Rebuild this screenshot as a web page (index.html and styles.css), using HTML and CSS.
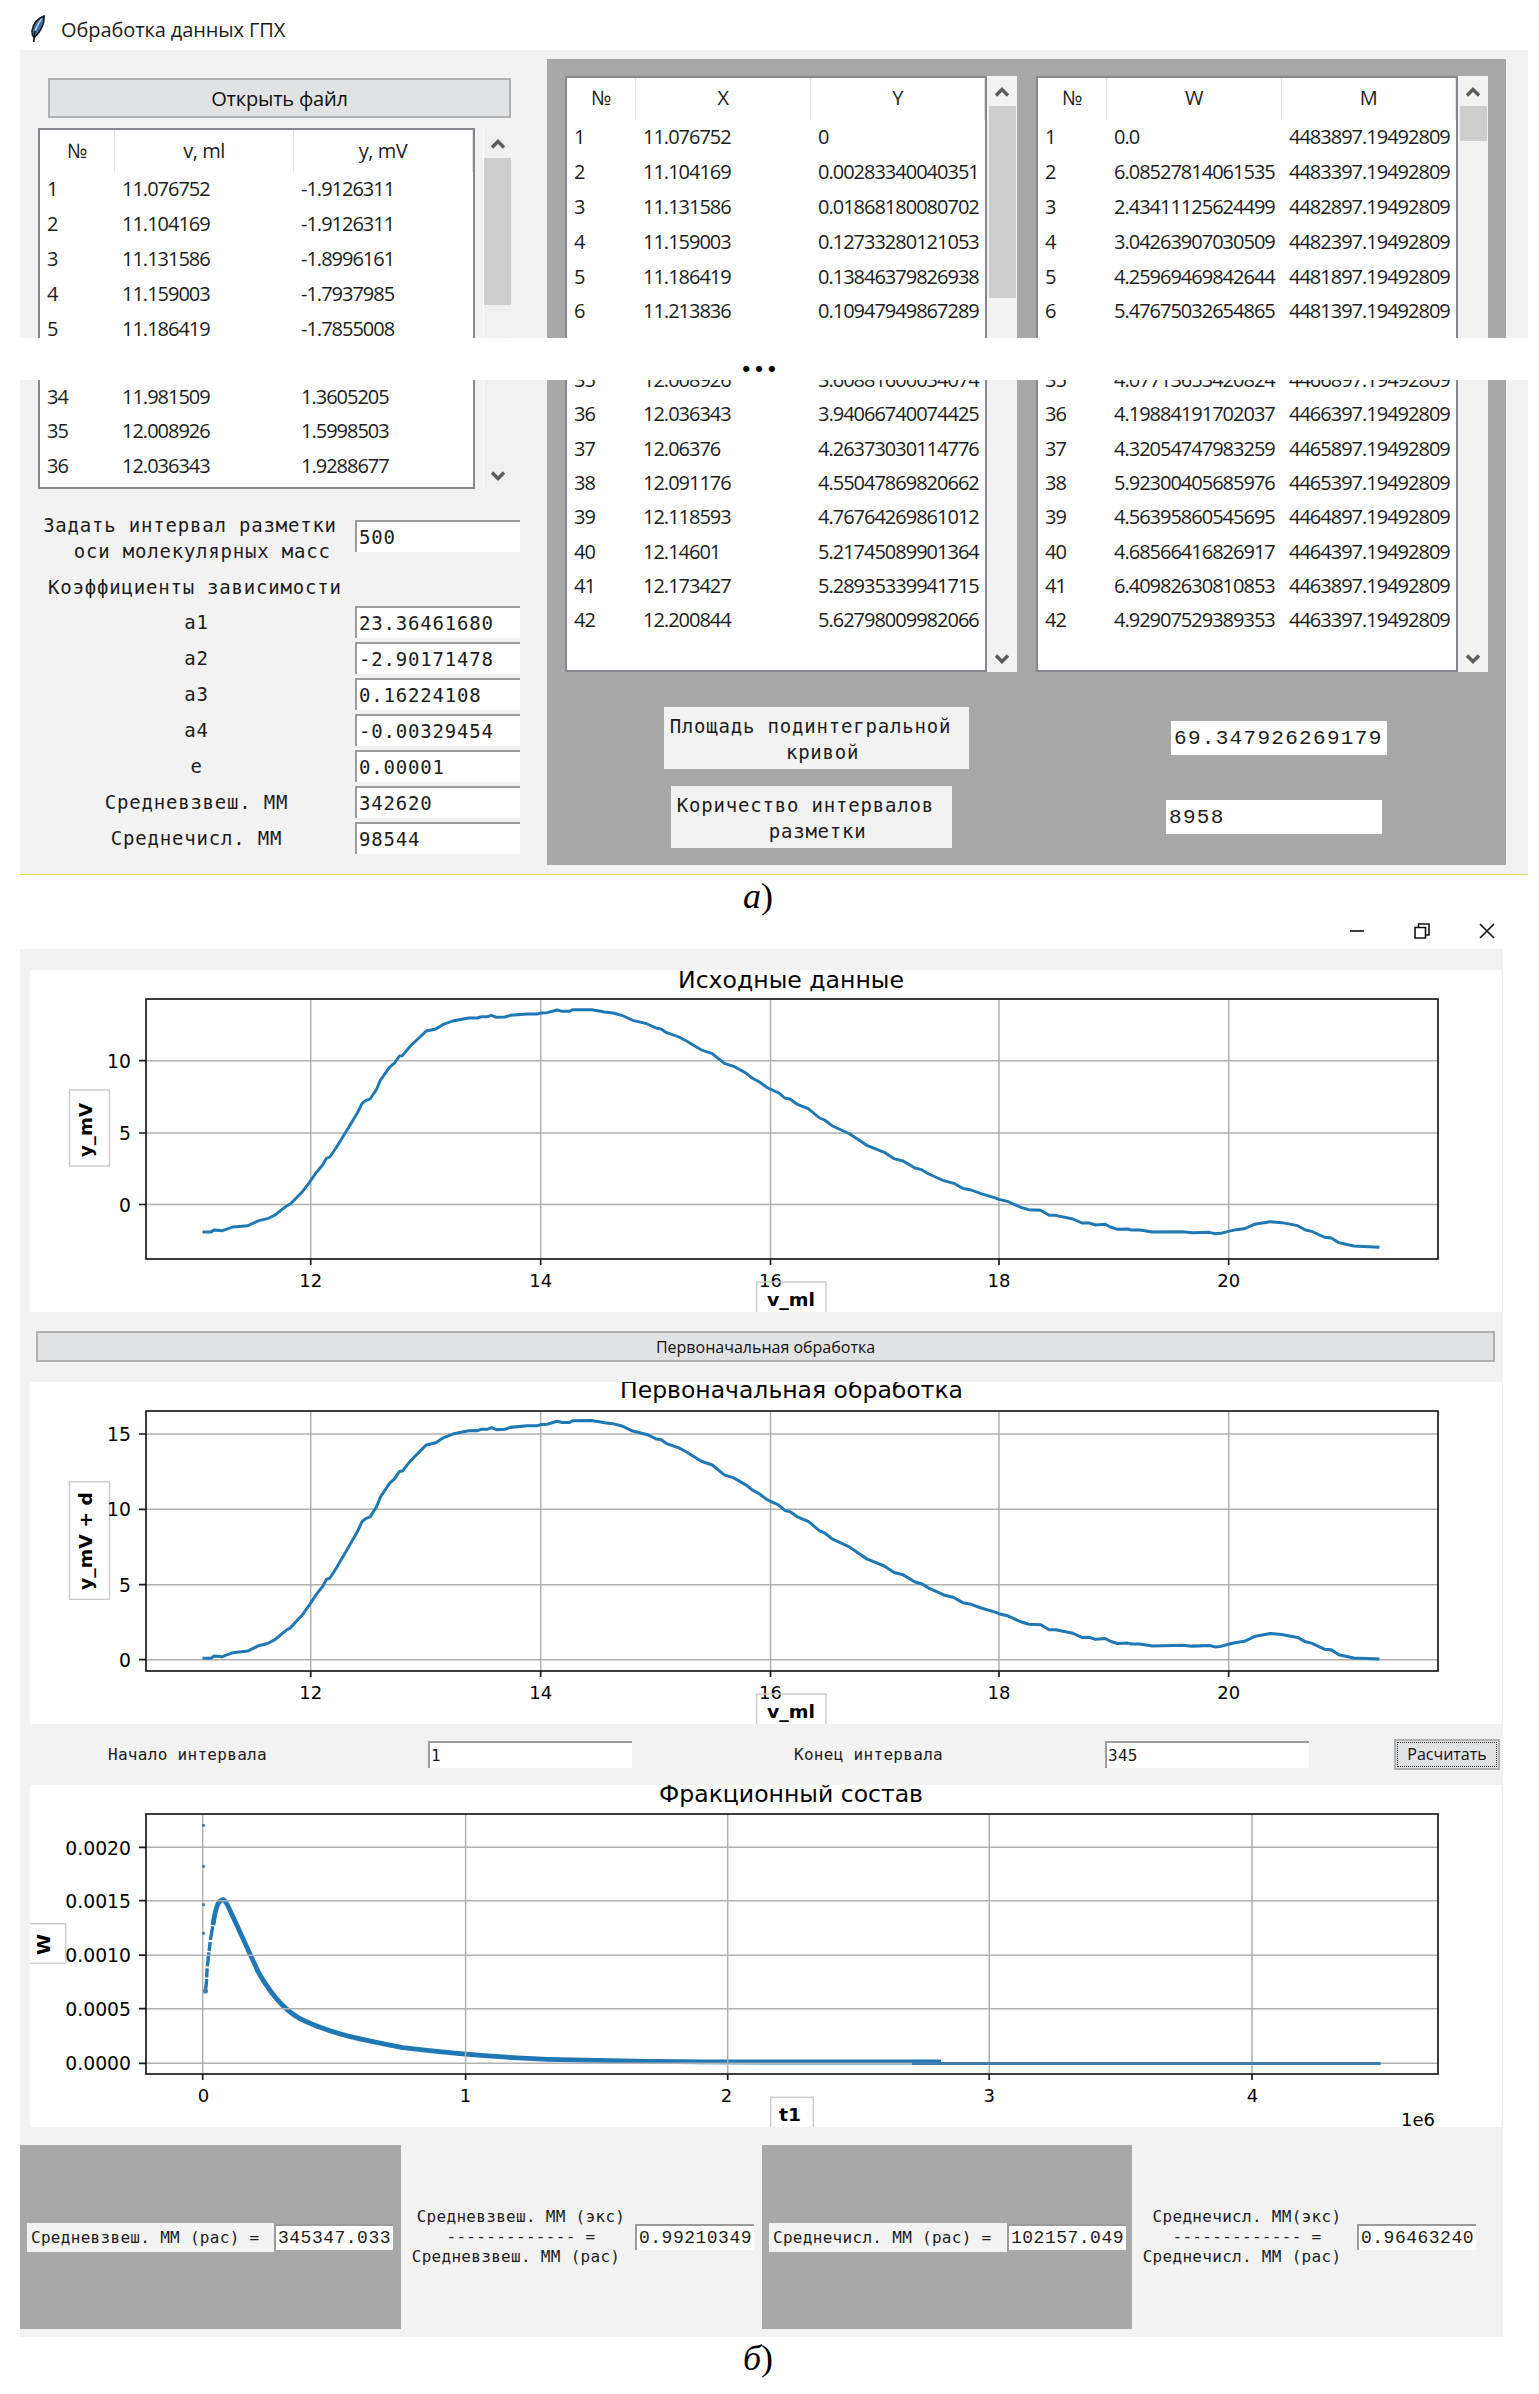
FILE: index.html
```html
<!DOCTYPE html>
<html lang="ru">
<head>
  <meta charset="UTF-8">
  <meta name="viewport" content="width=device-width, initial-scale=1.0">
  <title>Обработка данных ГПХ</title>
  <link rel="stylesheet" href="styles.css">
</head>
<body>
  <!-- Shared scrollbar arrows -->
  <svg class="defs" width="0" height="0">
    <symbol id="up" viewBox="0 0 14 11"><path d="M1 8.5 7 2.5 13 8.5" fill="none" stroke="#5c5c5c" stroke-width="3.4"/></symbol>
    <symbol id="down" viewBox="0 0 14 11"><path d="M1 2.5 7 8.5 13 2.5" fill="none" stroke="#5c5c5c" stroke-width="3.4"/></symbol>
  </svg>

  <!-- Data window -->
  <section class="data-window">
    <div class="title-bar">
      <svg class="feather" viewBox="0 0 18 30">
        <path d="M15.5 1C9 3 3.5 9 2.5 17L3 22L5 24L9 20C13 15 16 8 15.5 1Z" fill="#3f6ea3" stroke="#10151f" stroke-width="1.6"/>
        <path d="M13 4C9 9 6 15 5 22" stroke="#b9d3ee" stroke-width="1.5" fill="none"/>
        <path d="M6 17C5 21 4.5 25 4.5 29" stroke="#111" stroke-width="1.8" fill="none"/>
      </svg>
      <span>Обработка данных ГПХ</span>
    </div>

    <div class="slice slice-top">
      <div class="side">
        <button class="open-btn">Открыть файл</button>
        <div class="table-wrap">
          <div class="table table-source">
            <div class="head"><span>№</span><span>v, ml</span><span>y, mV</span></div>
            <div class="tr"><span>1</span><span>11.076752</span><span>-1.9126311</span></div>
            <div class="tr"><span>2</span><span>11.104169</span><span>-1.9126311</span></div>
            <div class="tr"><span>3</span><span>11.131586</span><span>-1.8996161</span></div>
            <div class="tr"><span>4</span><span>11.159003</span><span>-1.7937985</span></div>
            <div class="tr"><span>5</span><span>11.186419</span><span>-1.7855008</span></div>
          </div>
          <div class="scroll">
            <svg><use href="#up"/></svg>
            <div class="thumb thumb-source"></div>
          </div>
        </div>
      </div>
      <div class="results">
        <div class="table-wrap">
          <div class="table table-xy">
            <div class="head"><span>№</span><span>X</span><span>Y</span></div>
            <div class="tr"><span>1</span><span>11.076752</span><span>0</span></div>
            <div class="tr"><span>2</span><span>11.104169</span><span>0.00283340040351</span></div>
            <div class="tr"><span>3</span><span>11.131586</span><span>0.01868180080702</span></div>
            <div class="tr"><span>4</span><span>11.159003</span><span>0.12733280121053</span></div>
            <div class="tr"><span>5</span><span>11.186419</span><span>0.13846379826938</span></div>
            <div class="tr"><span>6</span><span>11.213836</span><span>0.10947949867289</span></div>
          </div>
          <div class="scroll">
            <svg><use href="#up"/></svg>
            <div class="thumb thumb-xy"></div>
          </div>
        </div>
        <div class="table-wrap">
          <div class="table table-wm">
            <div class="head"><span>№</span><span>W</span><span>M</span></div>
            <div class="tr"><span>1</span><span>0.0</span><span>4483897.19492809</span></div>
            <div class="tr"><span>2</span><span>6.08527814061535</span><span>4483397.19492809</span></div>
            <div class="tr"><span>3</span><span>2.43411125624499</span><span>4482897.19492809</span></div>
            <div class="tr"><span>4</span><span>3.04263907030509</span><span>4482397.19492809</span></div>
            <div class="tr"><span>5</span><span>4.25969469842644</span><span>4481897.19492809</span></div>
            <div class="tr"><span>6</span><span>5.47675032654865</span><span>4481397.19492809</span></div>
          </div>
          <div class="scroll">
            <svg><use href="#up"/></svg>
            <div class="thumb thumb-wm"></div>
          </div>
        </div>
      </div>
    </div>

    <div class="break">…</div>

    <div class="slice slice-bottom">
      <div class="side">
        <div class="table-wrap">
          <div class="table table-source">
            <div class="tr"><span>34</span><span>11.981509</span><span>1.3605205</span></div>
            <div class="tr"><span>35</span><span>12.008926</span><span>1.5998503</span></div>
            <div class="tr"><span>36</span><span>12.036343</span><span>1.9288677</span></div>
          </div>
          <div class="scroll"><svg><use href="#down"/></svg></div>
        </div>
        <div class="form">
          <div class="field field-step">
            <label>Задать интервал разметки
  оси молекулярных масс</label>
            <div class="entry">500</div>
          </div>
          <div class="form-title">Коэффициенты зависимости</div>
          <div class="field"><label>a1</label><div class="entry">23.36461680</div></div>
          <div class="field"><label>a2</label><div class="entry">-2.90171478</div></div>
          <div class="field"><label>a3</label><div class="entry">0.16224108</div></div>
          <div class="field"><label>a4</label><div class="entry">-0.00329454</div></div>
          <div class="field"><label>e</label><div class="entry">0.00001</div></div>
          <div class="field"><label>Средневзвеш. ММ</label><div class="entry">342620</div></div>
          <div class="field"><label>Среднечисл. ММ</label><div class="entry">98544</div></div>
        </div>
      </div>
      <div class="results">
        <div class="tables">
          <div class="table-wrap">
            <div class="table table-xy">
              <div class="tr"><span>35</span><span>12.008926</span><span>3.60881600034074</span></div>
              <div class="tr"><span>36</span><span>12.036343</span><span>3.94066740074425</span></div>
              <div class="tr"><span>37</span><span>12.06376</span><span>4.26373030114776</span></div>
              <div class="tr"><span>38</span><span>12.091176</span><span>4.55047869820662</span></div>
              <div class="tr"><span>39</span><span>12.118593</span><span>4.76764269861012</span></div>
              <div class="tr"><span>40</span><span>12.14601</span><span>5.21745089901364</span></div>
              <div class="tr"><span>41</span><span>12.173427</span><span>5.28935339941715</span></div>
              <div class="tr"><span>42</span><span>12.200844</span><span>5.62798009982066</span></div>
            </div>
            <div class="scroll"><svg><use href="#down"/></svg></div>
          </div>
          <div class="table-wrap">
            <div class="table table-wm">
              <div class="tr"><span>35</span><span>4.07713653420824</span><span>4466897.19492809</span></div>
              <div class="tr"><span>36</span><span>4.19884191702037</span><span>4466397.19492809</span></div>
              <div class="tr"><span>37</span><span>4.32054747983259</span><span>4465897.19492809</span></div>
              <div class="tr"><span>38</span><span>5.92300405685976</span><span>4465397.19492809</span></div>
              <div class="tr"><span>39</span><span>4.56395860545695</span><span>4464897.19492809</span></div>
              <div class="tr"><span>40</span><span>4.68566416826917</span><span>4464397.19492809</span></div>
              <div class="tr"><span>41</span><span>6.40982630810853</span><span>4463897.19492809</span></div>
              <div class="tr"><span>42</span><span>4.92907529389353</span><span>4463397.19492809</span></div>
            </div>
            <div class="scroll"><svg><use href="#down"/></svg></div>
          </div>
        </div>
        <div class="summary summary-area">
          <label>Площадь подинтегральной 
 кривой</label>
          <div class="value">69.347926269179</div>
        </div>
        <div class="summary summary-count">
          <label>Коричество интервалов 
 разметки</label>
          <div class="value">8958</div>
        </div>
      </div>
    </div>
  </section>

  <div class="caption caption-a"><i>а</i>)</div>

  <!-- Charts window -->
  <section class="chart-window">
    <div class="window-buttons">
      <svg viewBox="0 0 16 16"><path d="M1 8H15" /></svg>
      <svg viewBox="0 0 16 16"><path d="M1 4.5H11.5V15H1ZM4.5 4V1H15V12H12" /></svg>
      <svg viewBox="0 0 16 16"><path d="M1 1 15 15M15 1 1 15" /></svg>
    </div>

    <div class="charts">
      <svg class="figure" viewBox="0 0 1472 342">
        <g class="grid">
          <path d="M280.7 29V289M510.7 29V289M740.5 29V289M969 29V289M1198.7 29V289"/>
          <path d="M116 90.7H1408M116 163H1408M116 234.5H1408"/>
        </g>
        <polyline id="signal" class="curve" points="172.5,262 181,262 184,260 192.4,260.7 202.8,257 217.7,255.7 228.7,250.7 237.6,248.7 245,245 257,235.7 260,234.3 272.4,221.7 279.4,212.3 286.9,201.7 292.8,194.7 296.3,188.3 299.8,187 305.8,178.3 309.8,171.7 315.7,162.3 321.2,153.3 327.2,143.3 332.1,133.3 335.6,130.7 340.1,129 346.6,119.3 350.5,110 359.5,97.3 364.5,93 369.4,86 372.4,85.7 380.4,76 396.3,61 405.8,59 412.7,54.7 422.7,51 438.6,48 447.5,48 451.5,46.7 457.5,46.7 461.5,45.3 466.4,47.3 474.9,47 480.4,45.3 497.3,44 507.2,44 510.7,43 517.2,42.7 527.1,40 532.1,41.3 539.6,41.3 542.5,39.7 562,39.7 564.4,40.3 569.4,41 574.4,42 582.8,43 591.8,45.3 602.7,50.3 616.7,53.7 626.6,58.3 631.1,59 636.6,62.7 649,67 656.5,71 671.4,80 682.3,83.7 694.3,93.3 703.7,96.3 716.2,103.3 722.1,108 729.6,112 737,117.5 748.4,122.7 754.8,128 759.8,129 767.3,134.3 778.2,138.7 789.6,148 794.6,150 802,155.7 819.4,163.7 836.8,175.3 854.2,182.3 864.1,188.7 873.1,191 885,198 891.5,199.7 898.9,204 913.8,210.7 923.8,213.3 932.7,218.3 941.1,220 951.1,223.7 963.5,227.3 969,229.3 978.4,231.7 990.8,237.3 998.8,239.7 1010.7,240.3 1019.1,245.3 1025.6,245.3 1043,249 1051.9,253 1058.9,253 1065.4,255 1075.3,254.3 1080.3,257 1087.7,259.3 1097.6,259 1101.6,260 1110,260 1122.5,262 1152.3,261.7 1162.2,262.7 1179.6,262.3 1184.6,263.7 1190.6,263.3 1198.5,261.3 1206,259.7 1214.4,258.7 1224.3,254.3 1240.2,251.7 1251.7,252.7 1267.6,255.7 1275.5,260 1281.5,261.3 1294.4,267.3 1301.3,268 1308.8,272.7 1323.7,276 1349.5,277.3"/>
        <rect class="axes" x="116" y="29" width="1292" height="260"/>
        <path class="ticks" d="M280.7 289V295M510.7 289V295M740.5 289V295M969 289V295M1198.7 289V295M109 90.7H116M109 163H116M109 234.5H116"/>
        <g class="x-labels">
          <text x="280.7" y="317">12</text><text x="510.7" y="317">14</text><text x="740.5" y="317">16</text><text x="969" y="317">18</text><text x="1198.7" y="317">20</text>
        </g>
        <g class="y-labels">
          <text x="101" y="97.5">10</text><text x="101" y="170">5</text><text x="101" y="241.5">0</text>
        </g>
        <text class="chart-title" x="648" y="17.5" textLength="226" lengthAdjust="spacingAndGlyphs">Исходные данные</text>
        <rect class="label-box" x="39.5" y="120" width="40" height="76"/>
        <text class="axis-name" transform="translate(62 187) rotate(-90)" textLength="54" lengthAdjust="spacingAndGlyphs">y_mV</text>
        <rect class="label-box" x="726.6" y="312" width="69.4" height="40"/>
        <text class="axis-name" x="737" y="335.5" textLength="48" lengthAdjust="spacingAndGlyphs">v_ml</text>
      </svg>

      <button class="process-btn">Первоначальная обработка</button>

      <svg class="figure" viewBox="0 0 1472 342">
        <g class="grid">
          <path d="M280.7 29V289M510.7 29V289M740.5 29V289M969 29V289M1198.7 29V289"/>
          <path d="M116 52H1408M116 127.3H1408M116 202.7H1408M116 277.7H1408"/>
        </g>
        <!-- same signal with the base line removed -->
        <use href="#signal" transform="matrix(1 -0.013 0 1.047 0 4.2)"/>
        <rect class="axes" x="116" y="29" width="1292" height="260"/>
        <path class="ticks" d="M280.7 289V295M510.7 289V295M740.5 289V295M969 289V295M1198.7 289V295M109 52H116M109 127.3H116M109 202.7H116M109 277.7H116"/>
        <g class="x-labels">
          <text x="280.7" y="317">12</text><text x="510.7" y="317">14</text><text x="740.5" y="317">16</text><text x="969" y="317">18</text><text x="1198.7" y="317">20</text>
        </g>
        <rect class="label-box" x="39.5" y="99.7" width="40" height="117.6"/>
        <g class="y-labels">
          <text x="101" y="58.5">15</text><text x="101" y="134">10</text><text x="101" y="209.5">5</text><text x="101" y="284.5">0</text>
        </g>
        <text class="chart-title" x="590" y="15.5" textLength="343" lengthAdjust="spacingAndGlyphs">Первоначальная обработка</text>
        <text class="axis-name" transform="translate(62 208) rotate(-90)" textLength="98" lengthAdjust="spacingAndGlyphs">y_mV + d</text>
        <rect class="label-box" x="726.6" y="312" width="69.4" height="40"/>
        <text class="axis-name" x="737" y="335.5" textLength="48" lengthAdjust="spacingAndGlyphs">v_ml</text>
      </svg>

      <div class="interval">
        <label>Начало интервала</label>
        <div class="entry">1</div>
        <label>Конец интервала</label>
        <div class="entry">345</div>
        <button class="calc-btn"><span>Расчитать</span></button>
      </div>

      <svg class="figure" viewBox="0 0 1472 342">
        <polyline class="fraction rise" points="175,207.7 176.4,198.3 177,185 178.4,171.7 180.4,155 182.9,140"/>
        <path class="fraction" d="M182.9 140C184.5 130 186 123 187.9 119Q190.5 114.5 193.4 114.7Q196 116 201.3 128.3C212 151 222 174 228.7 187.7C243 213 258 229 276 236.5C305 250 338 256 373 262.7C425 269 470 272.5 517.2 274.3C600 276.5 680 277 750 277H911"/>
        <g class="grid">
          <path d="M172.7 29V289M435.6 29V289M697.7 29V289M959.2 29V289M1222 29V289"/>
          <path d="M116 62.3H1408M116 115.7H1408M116 170.2H1408M116 223.7H1408M116 278.3H1408"/>
        </g>
        <path class="tail" d="M882 278.5H1350.5"/>
        <g class="dots">
          <circle cx="173.5" cy="40.3" r="1.6"/><circle cx="173.5" cy="81.3" r="1.6"/><circle cx="173.5" cy="119.7" r="1.6"/><circle cx="173.5" cy="148.3" r="1.6"/>
          <circle cx="175.5" cy="206" r="2.6"/>
        </g>
        <rect class="axes" x="116" y="29" width="1292" height="260"/>
        <path class="ticks" d="M172.7 289V295M435.6 289V295M697.7 289V295M959.2 289V295M1222 289V295M109 62.3H116M109 115.7H116M109 170.2H116M109 223.7H116M109 278.3H116"/>
        <g class="x-labels">
          <text x="173.5" y="317">0</text><text x="435.6" y="317">1</text><text x="696.5" y="317">2</text><text x="959.2" y="317">3</text><text x="1222.5" y="317">4</text>
        </g>
        <rect class="label-box" x="-6" y="138.7" width="41.7" height="39.6"/>
        <g class="y-labels">
          <text x="101" y="69.5">0.0020</text><text x="101" y="123">0.0015</text><text x="101" y="177">0.0010</text><text x="101" y="231">0.0005</text><text x="101" y="285">0.0000</text>
        </g>
        <text class="chart-title" x="629" y="16.5" textLength="264" lengthAdjust="spacingAndGlyphs">Фракционный состав</text>
        <text class="axis-name" transform="translate(20 170) rotate(-90)" textLength="21" lengthAdjust="spacingAndGlyphs">W</text>
        <rect class="label-box" x="740.6" y="312.3" width="42.8" height="40"/>
        <text class="axis-name" x="749" y="335.5" textLength="22" lengthAdjust="spacingAndGlyphs">t1</text>
        <text class="scale" x="1405" y="341">1e6</text>
      </svg>
    </div>

    <div class="ratios">
      <div class="dark dark-w">
        <label>Средневзвеш. ММ (рас) =</label>
        <div class="value">345347.033</div>
      </div>
      <div class="ratio ratio-w">
        <label> Средневзвеш. ММ (экс)
 ------------- =
Средневзвеш. ММ (рас)</label>
        <div class="value">0.99210349</div>
      </div>
      <div class="dark dark-n">
        <label>Среднечисл. ММ (рас) =</label>
        <div class="value">102157.049</div>
      </div>
      <div class="ratio ratio-n">
        <label> Среднечисл. ММ(экс)
 ------------- =
Среднечисл. ММ (рас)</label>
        <div class="value">0.96463240</div>
      </div>
    </div>
  </section>

  <div class="caption caption-b"><i>б</i>)</div>
</body>
</html>
```
FILE: styles.css
```css
/* General Styles */
* {
  box-sizing: border-box;
}

body {
  margin: 0;
  background: #fff;
  color: #1c1c1c;
  font-family: "Open Sans", "Noto Sans", sans-serif;
  font-size: 20px;
}

.defs {
  position: absolute;
}

button {
  display: block;
  padding: 0;
  border: 2px solid #b0b1b3;
  background: #e1e2e4;
  color: #111;
  font-family: inherit;
}

/* Data window */
.data-window {
  width: 1508px;
  margin-left: 20px;
}

.title-bar {
  display: flex;
  align-items: center;
  height: 50px;
  padding: 8px 0 0 9px;
  letter-spacing: -0.1px;
}

.feather {
  width: 18px;
  height: 28px;
  margin-right: 14px;
}

.slice {
  display: flex;
  background: #f2f2f2;
  overflow: hidden;
}

.slice-top {
  height: 288px;
}

.slice-bottom {
  height: 495px;
  border-bottom: 1px solid #e2e052;
}

.break {
  height: 42px;
  padding-left: 720px;
  font: bold 38px/42px "Liberation Serif", serif;
  color: #000;
}

.side {
  width: 527px;
  padding-left: 18px;
}

.results {
  width: 959px;
  background: #a8a8a8;
}

.open-btn {
  width: 463px;
  height: 40px;
  margin: 28px 0 10px 10px;
  font-size: 20px;
  letter-spacing: -0.2px;
}

/* Tables */
.table-wrap {
  display: flex;
}

.table {
  background: #fff;
  border: 2px solid #85888e;
  letter-spacing: -1px;
  overflow: hidden;
}

.slice-top .table {
  border-bottom: 0;
}

.slice-bottom .table {
  border-top: 0;
}

.head, .tr {
  display: grid;
}

.head {
  height: 42px;
  letter-spacing: -0.5px;
}

.head span {
  border-right: 1px solid #e2e2e2;
  text-align: center;
  line-height: 42px;
}

.results .head span {
  line-height: 40px;
}

.tr {
  height: 34.9px;
  line-height: 34.9px;
}

.slice-bottom .tr {
  height: 34.35px;
  line-height: 34.35px;
}

.tr span {
  padding-left: 7px;
  white-space: nowrap;
  overflow: hidden;
}

.table-source {
  width: 437px;
}

.table-source .head, .table-source .tr {
  grid-template-columns: 75px 179px 1fr;
}

.table-xy, .table-wm {
  width: 422px;
}

.table-xy .head, .table-xy .tr {
  grid-template-columns: 69px 175px 1fr;
}

.table-wm .head, .table-wm .tr {
  grid-template-columns: 69px 175px 1fr;
}

.side .table-wrap {
  height: 360px;
}

.results .table-wrap {
  width: 452px;
}

.slice-top .results {
  display: flex;
  gap: 19px;
  margin-top: 9px;
  padding: 17px 0 0 18px;
}

.slice-top .results .table-wrap {
  height: 400px;
}

.scroll {
  display: flex;
  flex-direction: column;
  align-items: center;
  background: #f2f2f2;
}

.scroll svg {
  width: 14px;
  height: 11px;
  flex: none;
}

.side .scroll {
  width: 27px;
  margin-left: 9px;
  background: #f0f0f0;
  box-shadow: -1px 0 0 #fafafa;
}

.results .scroll {
  width: 30px;
}

.slice-top .scroll svg {
  margin: 11px 0 8px;
}

.thumb {
  width: 27px;
  background: #cdcdcd;
}

.thumb-source {
  height: 147px;
}

.thumb-xy {
  height: 192px;
}

.thumb-wm {
  height: 35px;
}

.slice-bottom .side .table-wrap {
  height: 109px;
}

.slice-bottom .scroll {
  justify-content: flex-end;
  padding-bottom: 8px;
}

.tables {
  display: flex;
  gap: 19px;
  padding-left: 18px;
}

.tables .table-wrap {
  height: 292px;
}

.tables .tr:first-child {
  margin-top: -17px;
}

/* Form */
.form, .summary label, .interval, .ratios label {
  font-family: "DejaVu Sans Mono", monospace;
}

.form {
  padding-top: 28px;
  font-size: 19px;
  letter-spacing: 0.8px;
}

.field {
  display: flex;
  align-items: center;
  height: 36px;
}

.field label {
  width: 317px;
  text-align: center;
}

.field-step {
  height: 56px;
}

.field-step label {
  width: 304px;
  margin: -15px 13px 0 0;
  line-height: 26px;
  white-space: pre;
}

.field-step .entry {
  margin-top: -19px;
}

.form-title {
  height: 31px;
  padding-left: 10px;
  line-height: 29px;
}

.entry {
  width: 165px;
  height: 32px;
  padding-left: 2px;
  border-top: 2px solid #9b9b9b;
  border-left: 2px solid #9b9b9b;
  background: #fff;
  line-height: 30px;
}

/* Area and count */
.summary {
  display: flex;
  align-items: center;
}

.slice-bottom .results {
  height: 485px;
}

.summary label {
  height: 62px;
  padding-top: 6px;
  background: #f2f2f2;
  font-size: 19px;
  letter-spacing: 0.8px;
  line-height: 26px;
  text-align: center;
  white-space: pre;
}

.summary-area {
  margin: 35px 0 17px 117px;
}

.summary-area label {
  width: 305px;
  margin-right: 202px;
}

.summary-count {
  margin-left: 124px;
}

.summary-count label {
  width: 281px;
  margin-right: 214px;
}

.value {
  background: #fff;
  font-family: "Liberation Mono", monospace;
}

.summary .value {
  width: 216px;
  height: 34px;
  padding-left: 3px;
  font-size: 21px;
  letter-spacing: 1.3px;
  line-height: 35px;
}

/* Captions */
.caption {
  padding-left: 743px;
  font: 36px/43px "Liberation Serif", serif;
  color: #000;
}

.caption-a {
  height: 44px;
}

.caption-b {
  height: 50px;
}

/* Charts window */
.chart-window {
  width: 1483px;
  margin-left: 20px;
}

.window-buttons {
  display: flex;
  justify-content: flex-end;
  gap: 49px;
  height: 30px;
  padding: 4px 8px 0 0;
}

.window-buttons svg {
  width: 16px;
  height: 16px;
  fill: none;
  stroke: #111;
  stroke-width: 1.6;
}

.charts {
  height: 1196px;
  padding: 21px 1px 0 10px;
  background: #f2f2f2;
}

.figure {
  display: block;
  width: 1472px;
  height: 342px;
  background: #fff;
  font-family: "DejaVu Sans", sans-serif;
}

.grid {
  fill: none;
  stroke: #b0b0b0;
  stroke-width: 1.5;
}

.axes {
  fill: none;
  stroke: #1a1a1a;
  stroke-width: 1.7;
}

.ticks {
  stroke: #1a1a1a;
  stroke-width: 1.7;
}

.curve {
  fill: none;
  stroke: #1f77b4;
  stroke-width: 2.9;
  stroke-linejoin: round;
}

.fraction {
  fill: none;
  stroke: #1f77b4;
  stroke-width: 4.8;
  stroke-linejoin: round;
}

.rise {
  stroke-width: 3.4;
  stroke-dasharray: 14 1.5 9 2;
}

.tail {
  fill: none;
  stroke: #3f7cab;
  stroke-width: 3;
}

.dots {
  fill: #4a7ea8;
}

.x-labels, .scale {
  font-size: 18px;
}

.y-labels {
  font-size: 18.8px;
}

.x-labels {
  text-anchor: middle;
}

.y-labels, .scale {
  text-anchor: end;
}

.chart-title {
  font-size: 23.5px;
}

.label-box {
  fill: none;
  stroke: #ccc;
  stroke-width: 1.5;
}

.axis-name {
  font-size: 18.5px;
  font-weight: bold;
  fill: #000;
}

.process-btn {
  width: 1459px;
  height: 31px;
  margin: 19px 0 20px 6px;
  font-size: 16px;
  line-height: 26px;
}

.interval {
  display: flex;
  align-items: center;
  height: 61px;
  padding-left: 78px;
  font-size: 16px;
  letter-spacing: 0.3px;
}

.interval label {
  width: 320px;
}

.interval .entry {
  width: 204px;
  height: 27px;
  margin-right: 162px;
  padding-left: 1px;
  line-height: 26px;
}

.interval label:nth-of-type(2) {
  width: 311px;
}

.interval .entry:nth-of-type(2) {
  margin-right: 85px;
}

.calc-btn {
  width: 106px;
  height: 31px;
  padding: 1px;
  font-family: "Open Sans", "Noto Sans", sans-serif;
  font-size: 16px;
}

.calc-btn span {
  display: block;
  border: 1px dotted #222;
  line-height: 23px;
}

/* Calculated masses */
.ratios {
  display: flex;
  height: 192px;
  padding-bottom: 8px;
  background: #f2f2f2;
}

.ratios label {
  font-size: 16px;
  letter-spacing: 0.3px;
}

.dark, .ratio {
  display: flex;
  align-items: center;
}

.dark {
  padding-left: 7px;
  background: #a8a8a8;
}

.dark-w {
  width: 381px;
}

.dark-n {
  width: 370px;
}

.dark label {
  height: 29px;
  padding-left: 4px;
  background: #f2f2f2;
  line-height: 30px;
}

.dark-w label {
  width: 247px;
}

.dark-n label {
  width: 238px;
}

.ratio label {
  line-height: 20.3px;
  text-align: center;
  white-space: pre;
}

.ratio-w {
  width: 361px;
  padding-left: 5px;
}

.ratio-w label {
  width: 220px;
  margin-right: 9px;
}

.ratio-n {
  padding-left: 10px;
}

.ratio-n label {
  width: 200px;
  margin-right: 15px;
}

.ratios .value {
  width: 119px;
  height: 26px;
  padding-left: 2px;
  border-top: 2px solid #9b9b9b;
  border-left: 2px solid #9b9b9b;
  font-size: 18px;
  letter-spacing: 0.5px;
  line-height: 24px;
}
```
